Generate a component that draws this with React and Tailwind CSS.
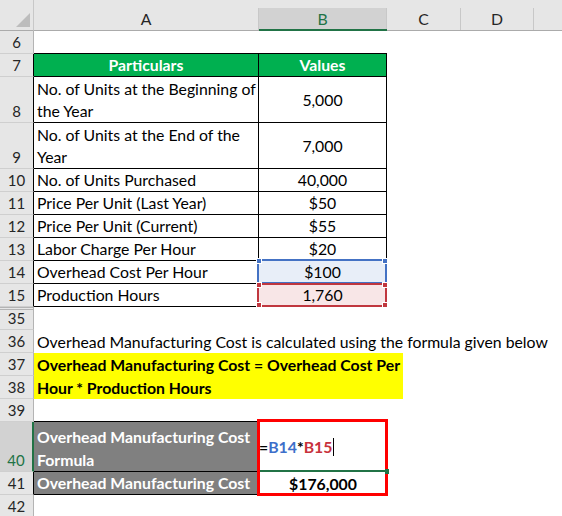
const items = [
  { n: 8, label: ['No. of Units at the Beginning of', 'the Year'], value: '5,000' },
  { n: 9, label: ['No. of Units at the End of the', 'Year'], value: '7,000' },
  { n: 10, label: ['No. of Units Purchased'], value: '40,000' },
  { n: 11, label: ['Price Per Unit (Last Year)'], value: '$50' },
  { n: 12, label: ['Price Per Unit (Current)'], value: '$55' },
  { n: 13, label: ['Labor Charge Per Hour'], value: '$20' },
  { n: 14, label: ['Overhead Cost Per Hour'], value: '$100', mark: 'blue' },
  { n: 15, label: ['Production Hours'], value: '1,760', mark: 'red' },
]

function ColHead({ w, label, active }) {
  return (
    <div className={`${w} shrink-0 h-[31px] pt-[8px] flex ${active ? 'border-b-2 border-b-[#217346]' : 'border-b border-b-[#ababab]'}`}>
      <div className={`flex-1 flex items-center justify-center border-r border-r-[#c8c8c8] ${active ? 'bg-[#d2d2d2] text-[#217346]' : 'text-[#262626]'}`}>
        {label}
      </div>
    </div>
  )
}

function Num({ n, h = 'h-[23px]', edge = 'gray', active, gap }) {
  const edges = {
    gray: 'border-r border-r-[#b4b4b4]',
    black: 'border-r border-r-black',
    green: 'border-r-2 border-r-[#217346]',
  }
  return (
    <div
      className={`${h} w-[34px] shrink-0 flex items-end justify-center text-[15px] leading-[22px] border-b border-b-[#cfcfcf] ${edges[edge]} ${
        active ? 'bg-[#d2d2d2] text-[#217346]' : 'bg-[#e6e6e6] text-[#262626]'
      } ${gap ? 'border-t-[3px] border-t-[#b4b4b4] border-double' : ''}`}
    >
      {n}
    </div>
  )
}

function Handle({ pos, color }) {
  return <div className={`absolute w-[6px] h-[6px] border border-white ${pos} ${color}`} />
}

function Mark({ kind }) {
  if (kind === 'blue') {
    return (
      <div className="absolute -top-[2px] -left-[2px] -right-[1px] -bottom-[1px] border-2 border-[#4472c4]">
        <Handle pos="-top-[3px] -left-[3px]" color="bg-[#4472c4]" />
        <Handle pos="-top-[3px] -right-[3px]" color="bg-[#4472c4]" />
      </div>
    )
  }
  return (
    <div className="absolute -top-[1px] -left-[2px] -right-[1px] -bottom-[1px] border-2 border-[#c0373f]">
      <Handle pos="-top-[3px] -left-[3px]" color="bg-[#c0373f]" />
      <Handle pos="-top-[3px] -right-[3px]" color="bg-[#c0373f]" />
      <Handle pos="-bottom-[3px] -left-[3px]" color="bg-[#c0373f]" />
      <Handle pos="-bottom-[3px] -right-[3px]" color="bg-[#c0373f]" />
    </div>
  )
}

export default function App() {
  return (
    <div className="w-[562px] h-[516px] overflow-hidden bg-white text-black text-[15.8px] font-[Lato,sans-serif]">
      {/* Column headers */}
      <div className="flex bg-[#e6e6e6]">
        <div className="w-[34px] shrink-0 h-[31px] border-b border-b-[#ababab] border-r border-r-[#c8c8c8]">
          <svg width="33" height="30" viewBox="0 0 33 30">
            <polygon points="16,27 30,27 30,13" fill="#bdbdbd" />
          </svg>
        </div>
        <ColHead w="w-[225px]" label="A" />
        <ColHead w="w-[128px]" label="B" active />
        <ColHead w="w-[74px]" label="C" />
        <ColHead w="w-[73px]" label="D" />
        <div className="flex-1 h-[31px] border-b border-b-[#ababab]" />
      </div>

      {/* Row 6 */}
      <div className="flex h-[23px]">
        <Num n={6} />
        <div className="w-[225px] shrink-0 border-b border-black" />
        <div className="w-[128px] shrink-0 border-b border-black" />
      </div>

      {/* Row 7 - table head */}
      <div className="flex h-[23px]">
        <Num n={7} edge="black" />
        <div className="w-[225px] shrink-0 bg-[#00b050] text-white font-bold flex items-end justify-center leading-[22px] border-r border-b border-black">
          Particulars
        </div>
        <div className="w-[128px] shrink-0 bg-[#00b050] text-white font-bold flex items-end justify-center leading-[22px] border-r border-b border-black">
          Values
        </div>
      </div>

      {items.map(item => {
        const tall = item.label.length > 1
        return (
          <div key={item.n} className={`flex ${tall ? 'h-[46px]' : 'h-[23px]'}`}>
            <Num n={item.n} h={tall ? 'h-[46px]' : 'h-[23px]'} edge="black" />
            <div className="w-[225px] shrink-0 px-[3px] flex flex-col justify-end leading-[22px] border-r border-b border-black whitespace-nowrap">
              {item.label.map(line => (
                <div key={line}>{line}</div>
              ))}
            </div>
            <div
              className={`relative w-[128px] shrink-0 flex items-center justify-center leading-[22px] border-r border-b border-black ${
                item.mark === 'blue' ? 'bg-[#e8eef8]' : item.mark === 'red' ? 'bg-[#f8e6e7]' : ''
              }`}
            >
              {item.value}
              {item.mark && <Mark kind={item.mark} />}
            </div>
          </div>
        )
      })}

      {/* Row 35 (rows 16-34 hidden) */}
      <div className="flex h-[23px]">
        <Num n={35} gap />
      </div>

      {/* Row 36 */}
      <div className="flex h-[23px]">
        <Num n={36} />
        <div className="flex-1 px-[3px] leading-[22px] flex items-end whitespace-nowrap">
          Overhead Manufacturing Cost is calculated using the formula given below
        </div>
      </div>

      {/* Rows 37-38 - formula note */}
      <div className="flex h-[46px]">
        <div className="flex flex-col">
          <Num n={37} />
          <Num n={38} />
        </div>
        <div className="w-[369px] shrink-0 bg-[#ffff00] font-bold px-[3px] leading-[23px] flex flex-col justify-end whitespace-nowrap">
          <div>Overhead Manufacturing Cost = Overhead Cost Per</div>
          <div>Hour * Production Hours</div>
        </div>
      </div>

      {/* Row 39 */}
      <div className="flex h-[23px]">
        <Num n={39} />
        <div className="w-[225px] shrink-0 border-b border-black" />
      </div>

      {/* Rows 40-41 - result */}
      <div className="flex h-[73px]">
        <div className="flex flex-col">
          <Num n={40} h="h-[50px]" edge="green" active />
          <Num n={41} edge="black" />
        </div>
        <div className="w-[225px] shrink-0 flex flex-col bg-[#808080] text-white font-bold">
          <div className="h-[50px] px-[3px] flex flex-col justify-end leading-[23px] border-r border-b border-black whitespace-nowrap">
            <div>Overhead Manufacturing Cost</div>
            <div>Formula</div>
          </div>
          <div className="h-[23px] px-[3px] flex items-end leading-[22px] border-r border-b border-black whitespace-nowrap">
            Overhead Manufacturing Cost
          </div>
        </div>
        <div className="relative w-[128px] shrink-0 flex flex-col font-bold">
          <div className="h-[50px] flex items-center border-b-2 border-b-[#217346] pt-[1px]">
            <span>=</span>
            <span className="text-[#3d6fca]">B14</span>
            <span>*</span>
            <span className="text-[#c8323c]">B15</span>
            <span className="ml-[1px] w-px h-[18px] bg-black" />
          </div>
          <div className="h-[23px] flex items-end justify-center leading-[22px]">$176,000</div>
          <div className="absolute -top-[3px] -left-[2px] -right-[1px] -bottom-[1px] border-[3px] border-[#ff0000]" />
          <div className="absolute top-[47px] -right-[2px] w-[4px] h-[5px] bg-[#217346]" />
        </div>
      </div>

      {/* Row 42 */}
      <div className="flex h-[23px]">
        <Num n={42} />
      </div>
    </div>
  )
}
